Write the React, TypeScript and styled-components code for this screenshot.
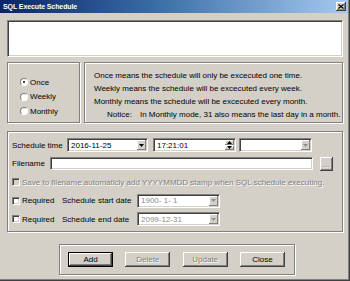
import React from 'react';
import styled, { createGlobalStyle, css } from 'styled-components';

const GlobalStyle = createGlobalStyle`
  html, body {
    margin: 0;
    padding: 0;
    background: #d4d0c8;
  }
  body {
    font-family: "Liberation Sans", Arial, sans-serif;
    font-size: 8px;
    color: #000;
  }
  * {
    box-sizing: border-box;
  }
`;

const sunken = css`
  border: 1px solid;
  border-color: #808080 #ffffff #ffffff #808080;
  box-shadow: inset 1px 1px 0 #404040, inset -1px -1px 0 #d4d0c8;
`;

const raised = css`
  background: #d4d0c8;
  box-shadow: inset -1px -1px 0 #404040, inset 1px 1px 0 #ffffff, inset -2px -2px 0 #808080;
`;

const raisedSmall = css`
  background: #d4d0c8;
  box-shadow: inset -1px -1px 0 #808080, inset 1px 1px 0 #ffffff;
`;

const disabledText = css`
  color: #808080;
  text-shadow: 1px 1px 0 #ffffff;
`;

const Window = styled.div`
  width: 350px;
  height: 281px;
  background: #d4d0c8;
  display: flex;
  flex-direction: column;
  box-shadow: inset -1px -1px 0 #404040, inset -2px -2px 0 #808080;
  overflow: hidden;
`;

const TitleBar = styled.div`
  height: 13px;
  margin-right: 2px;
  padding: 0 2px 0 3px;
  display: flex;
  align-items: center;
  justify-content: space-between;
  background: linear-gradient(to right, #0a246a 0%, #3a6ea5 45%, #a6caf0 100%);
  color: #fff;
  font-weight: bold;
  font-size: 7px;
  letter-spacing: -0.1px;
`;

const CloseButton = styled.div`
  width: 10px;
  height: 9px;
  ${raised};
  display: flex;
  align-items: center;
  justify-content: center;
`;

const Body = styled.div`
  display: flex;
  flex-direction: column;
  padding: 7px 7px 0 7px;
`;

const Memo = styled.div`
  height: 37px;
  background: #fff;
  ${sunken};
`;

const TopRow = styled.div`
  display: flex;
  gap: 4px;
  height: 61px;
  margin-top: 5px;
`;

const GroupBox = styled.div<{ $w?: number }>`
  ${p => (p.$w ? `width: ${p.$w}px;` : 'flex: 1;')}
  border: 1px solid #808080;
  box-shadow: inset 1px 1px 0 #fff, 1px 1px 0 #fff;
`;

const RadioGroup = styled(GroupBox)`
  padding: 12px 0 0 12px;
`;

const RadioRow = styled.div`
  height: 14.5px;
  display: flex;
  align-items: center;
  gap: 2px;
`;

const RadioDot = styled.span<{ $checked?: boolean }>`
  width: 8px;
  height: 8px;
  border-radius: 50%;
  background: #fff;
  border: 1px solid;
  border-color: #808080 #fff #fff #808080;
  display: flex;
  align-items: center;
  justify-content: center;
  &::after {
    content: '';
    width: 2px;
    height: 2px;
    border-radius: 50%;
    background: ${p => (p.$checked ? '#000' : 'transparent')};
  }
`;

const InfoGroup = styled(GroupBox)`
  padding: 6px 0 0 9px;
`;

const InfoLine = styled.div<{ $indent?: number }>`
  line-height: 13px;
  white-space: nowrap;
  padding-left: ${p => p.$indent || 0}px;
`;

const NoticeWord = styled.span`
  margin-right: 8px;
`;

const FormGroup = styled(GroupBox)`
  flex: none;
  height: 101px;
  margin-top: 8px;
  padding: 6px 4px 0 4px;
  display: flex;
  flex-direction: column;
  gap: 4.5px;
`;

const FormRow = styled.div`
  height: 14px;
  display: flex;
  align-items: center;
`;

const Label = styled.span<{ $w?: number; $disabled?: boolean }>`
  ${p => (p.$w ? `width: ${p.$w}px;` : '')}
  flex: none;
  white-space: nowrap;
  ${p => (p.$disabled ? disabledText : '')}
`;

const Combo = styled.div<{ $w: number; $gap?: number }>`
  width: ${p => p.$w}px;
  height: 14px;
  margin-left: ${p => p.$gap || 0}px;
  flex: none;
  display: flex;
  align-items: stretch;
  padding: 1px;
  background: #fff;
  ${sunken};
`;

const ComboText = styled.span<{ $disabled?: boolean }>`
  flex: 1;
  padding-left: 2px;
  display: flex;
  align-items: center;
  white-space: pre;
  color: ${p => (p.$disabled ? '#8c8c8c' : '#000')};
`;

const ArrowButton = styled.span`
  width: 9px;
  flex: none;
  ${raisedSmall};
  display: flex;
  align-items: center;
  justify-content: center;
`;

const SpinBox = styled.span`
  width: 9px;
  flex: none;
  display: flex;
  flex-direction: column;
  gap: 1px;
`;

const SpinButton = styled.span`
  flex: 1;
  ${raisedSmall};
  display: flex;
  align-items: center;
  justify-content: center;
`;

const TextInput = styled.div<{ $w: number }>`
  width: ${p => p.$w}px;
  height: 13px;
  background: #fff;
  ${sunken};
`;

const DotsButton = styled.button`
  width: 13px;
  height: 14px;
  margin-left: 7px;
  padding: 0 0 2px 0;
  border: none;
  font-family: inherit;
  font-size: 8px;
  line-height: 8px;
  ${raised};
  ${disabledText};
  display: flex;
  align-items: flex-end;
  justify-content: center;
`;

const CheckBox = styled.span<{ $disabled?: boolean }>`
  width: 8px;
  height: 8px;
  flex: none;
  margin-right: 2px;
  background: ${p => (p.$disabled ? '#d4d0c8' : '#fff')};
  border: 1px solid;
  border-color: #808080 #fff #fff #808080;
  box-shadow: inset 1px 1px 0 #404040, inset -1px -1px 0 #d4d0c8;
`;

const ButtonGroup = styled(GroupBox)`
  flex: none;
  width: 236px;
  height: 31px;
  margin: 12px 0 0 52px;
  padding: 0 9px 0 8px;
  display: flex;
  align-items: center;
  justify-content: space-between;
`;

const PushButton = styled.button<{ $primary?: boolean; $disabled?: boolean }>`
  width: 45px;
  height: 15px;
  padding: 0;
  border: none;
  font: inherit;
  background: #d4d0c8;
  color: #000;
  display: flex;
  align-items: center;
  justify-content: center;
  box-shadow: ${p =>
    p.$primary
      ? 'inset 0 0 0 1px #000, inset -2px -2px 0 #404040, inset 2px 2px 0 #fff, inset -3px -3px 0 #808080'
      : 'inset -1px -1px 0 #404040, inset 1px 1px 0 #fff, inset -2px -2px 0 #808080'};
  ${p => (p.$disabled ? disabledText : '')}
`;

const Triangle = ({ up, color = '#000' }: { up?: boolean; color?: string }) => (
  <svg width="5" height="3" viewBox="0 0 5 3">
    <polygon points={up ? '2.5,0 5,3 0,3' : '0,0 5,0 2.5,3'} fill={color} />
  </svg>
);

const DropDown = ({ w, gap, text, disabled }: { w: number; gap?: number; text?: string; disabled?: boolean }) => (
  <Combo $w={w} $gap={gap}>
    <ComboText $disabled={disabled}>{text}</ComboText>
    <ArrowButton>
      <Triangle color={disabled ? '#909090' : '#000'} />
    </ArrowButton>
  </Combo>
);

export default function App() {
  return (
    <Window>
      <GlobalStyle />
      <TitleBar>
        <span>SQL Execute Schedule</span>
        <CloseButton>
          <svg width="6" height="5" viewBox="0 0 6 5">
            <path d="M0.5 0.5 L5.5 4.5 M5.5 0.5 L0.5 4.5" stroke="#000" strokeWidth="1.2" />
          </svg>
        </CloseButton>
      </TitleBar>
      <Body>
        <Memo />
        <TopRow>
          <RadioGroup $w={73}>
            <RadioRow><RadioDot $checked />Once</RadioRow>
            <RadioRow><RadioDot />Weekly</RadioRow>
            <RadioRow><RadioDot />Monthly</RadioRow>
          </RadioGroup>
          <InfoGroup>
            <InfoLine>Once means the schedule will only be excecuted one time.</InfoLine>
            <InfoLine>Weekly means the schedule will be excecuted every week.</InfoLine>
            <InfoLine>Monthly means the schedule will be excecuted every month.</InfoLine>
            <InfoLine $indent={13}>
              <NoticeWord>Notice:</NoticeWord>In Monthly mode, 31 also means the last day in a month.
            </InfoLine>
          </InfoGroup>
        </TopRow>
        <FormGroup>
          <FormRow>
            <Label $w={55}>Schedule time</Label>
            <DropDown w={81} text="2016-11-25" />
            <Combo $w={83} $gap={5}>
              <ComboText>17:21:01</ComboText>
              <SpinBox>
                <SpinButton><Triangle up /></SpinButton>
                <SpinButton><Triangle /></SpinButton>
              </SpinBox>
            </Combo>
            <DropDown w={73} gap={3} disabled />
          </FormRow>
          <FormRow>
            <Label $w={38}>Filename</Label>
            <TextInput $w={263} />
            <DotsButton>...</DotsButton>
          </FormRow>
          <FormRow>
            <CheckBox $disabled />
            <Label $disabled>Save to filename automaticly add YYYYMMDD stamp when SQL schedule executing.</Label>
          </FormRow>
          <FormRow>
            <CheckBox />
            <Label $w={40}>Required</Label>
            <Label $w={36}>Schedule</Label>
            <Label $w={39}>start date</Label>
            <DropDown w={83} text="1900- 1- 1" disabled />
          </FormRow>
          <FormRow>
            <CheckBox />
            <Label $w={40}>Required</Label>
            <Label $w={36}>Schedule</Label>
            <Label $w={39}>end date</Label>
            <DropDown w={83} text="2099-12-31" disabled />
          </FormRow>
        </FormGroup>
        <ButtonGroup>
          <PushButton $primary>Add</PushButton>
          <PushButton $disabled>Delete</PushButton>
          <PushButton $disabled>Update</PushButton>
          <PushButton>Close</PushButton>
        </ButtonGroup>
      </Body>
    </Window>
  );
}
